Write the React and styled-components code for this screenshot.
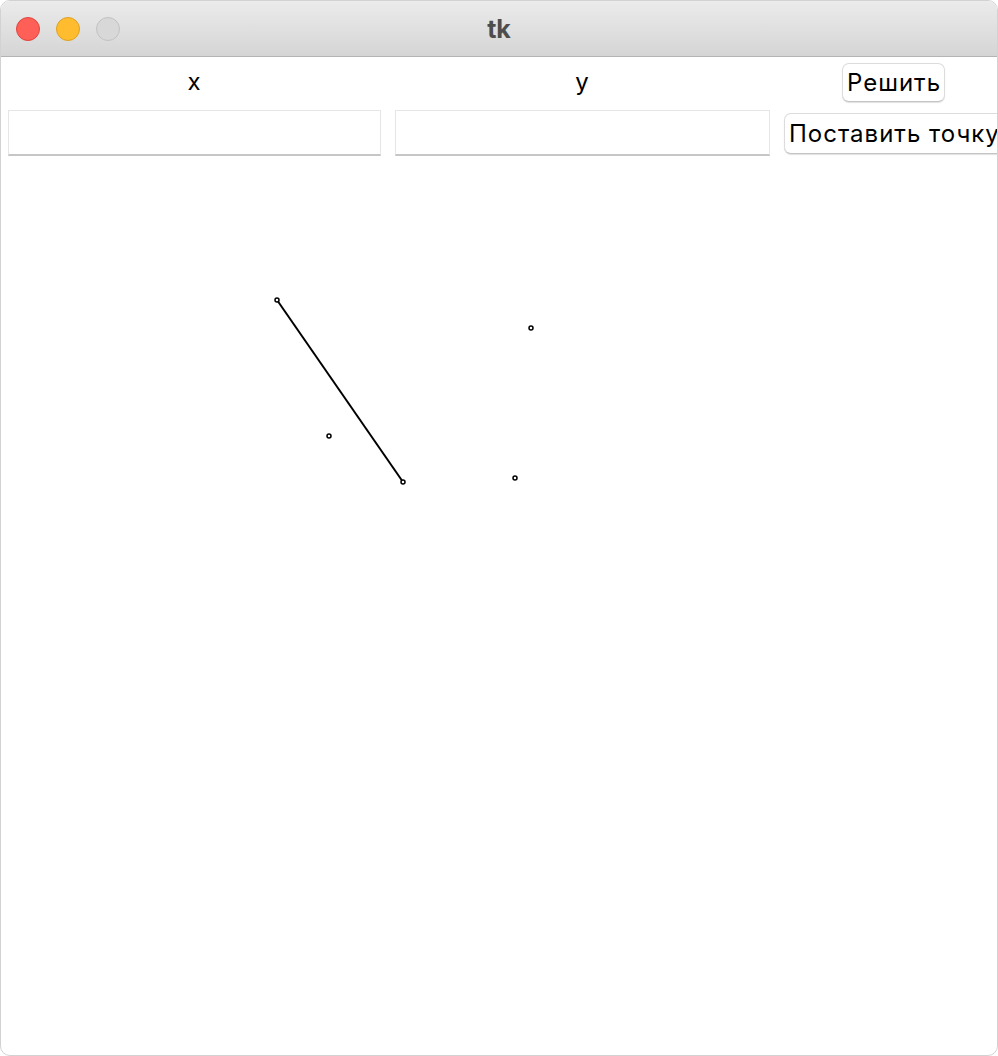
import React from 'react'
import styled, { createGlobalStyle } from 'styled-components'

const Global = createGlobalStyle`
  html, body { margin: 0; padding: 0; background: #ffffff; }
  body { font-family: Inter, "Liberation Sans", Arial, sans-serif; }
`;

const Window = styled.div`
  width: 998px;
  height: 1056px;
  box-sizing: border-box;
  border-radius: 10px;
  border: 1px solid #d2d2d2;
  overflow: hidden;
  background: #ffffff;
  display: flex;
  flex-direction: column;
`;

const TitleBar = styled.div`
  height: 55px;
  flex: none;
  display: flex;
  align-items: center;
  position: relative;
  background: linear-gradient(#ebebeb, #d5d5d5);
  border-bottom: 1px solid #b4b4b4;
`;

const Lights = styled.div`
  display: flex;
  gap: 16px;
  padding-left: 15px;
`;

const Light = styled.span`
  width: 24px;
  height: 24px;
  box-sizing: border-box;
  border-radius: 50%;
  background: ${(p) => p.fill};
  border: 1px solid ${(p) => p.edge};
`;

const Title = styled.div`
  position: absolute;
  left: 0;
  right: 0;
  text-align: center;
  font-weight: bold;
  font-size: 25px;
  color: #4d4d4d;
`;

const Controls = styled.div`
  display: grid;
  grid-template-columns: 387px 389px 240px;
  grid-template-rows: 50px 52px;
  overflow: hidden;
`;

const Label = styled.div`
  display: flex;
  align-items: center;
  justify-content: center;
  font-size: 24px;
  letter-spacing: 1px;
  color: #000;
  padding-bottom: 1px;
`;

const Cell = styled.div`
  display: flex;
  align-items: center;
  justify-content: flex-start;
  padding: ${(p) => (p.start ? '0 0 0 7px' : '0 7px')};
`;

const Entry = styled.input`
  width: 100%;
  height: 46px;
  box-sizing: border-box;
  border: 1px solid #e6e6e6;
  border-bottom: 2px solid #c6c6c6;
  background: #fff;
  outline: none;
`;

const Button = styled.button`
  font-family: Inter, "Liberation Sans", Arial, sans-serif;
  font-size: 24px;
  letter-spacing: 1px;
  color: #000;
  background: #fff;
  border: 1px solid #dcdcdc;
  border-bottom-color: #c4c4c4;
  border-radius: 7px;
  box-shadow: 0 1px 1px rgba(0, 0, 0, 0.12);
  padding: 0 3px 0 4px;
  height: ${(p) => p.h}px;
  white-space: nowrap;
  margin-left: ${(p) => p.ml || 0}px;
`;

const Canvas = styled.svg`
  flex: 1;
  display: block;
  width: 100%;
`;

const points = [
  [277, 300],
  [403, 482],
  [329, 436],
  [531, 328],
  [515, 478],
];

export default function App() {
  const top = 56 + 102;
  return (
    <Window>
      <Global />
      <TitleBar>
        <Lights>
          <Light fill="#fe5f57" edge="#e0443e" />
          <Light fill="#febc2e" edge="#dea123" />
          <Light fill="#d8d8d8" edge="#c2c2c2" />
        </Lights>
        <Title>tk</Title>
      </TitleBar>
      <Controls>
        <Label>x</Label>
        <Label>y</Label>
        <Cell start>
          <Button h={39} ml={58}>Решить</Button>
        </Cell>
        <Cell><Entry /></Cell>
        <Cell><Entry /></Cell>
        <Cell start>
          <Button h={41} ml={0}>Поставить точку</Button>
        </Cell>
      </Controls>
      <Canvas>
        <line x1={277 - 1} y1={300 - top - 1} x2={403 - 1} y2={482 - top - 1} stroke="#000" strokeWidth="2" />
        {points.map(([x, y], i) => (
          <circle key={i} cx={x - 1} cy={y - top - 1} r="2" fill="#fff" stroke="#000" strokeWidth="1.5" />
        ))}
      </Canvas>
    </Window>
  )
}
